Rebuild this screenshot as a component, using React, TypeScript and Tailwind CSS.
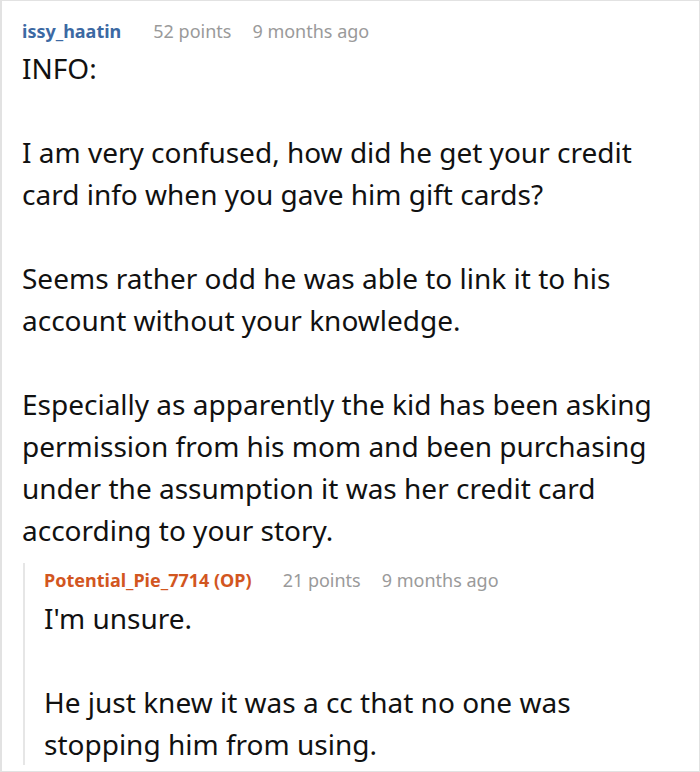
import React from "react";

const font = { fontFamily: '"Noto Sans", "Open Sans", sans-serif' };

export default function App() {
  return (
    <div
      className="w-[700px] h-[772px] bg-white border border-[#e2e2e2] border-l-2 overflow-hidden box-border"
      style={font}
    >
      <div className="pl-[20px] pr-4 pt-[14px]">
        <div className="flex items-baseline h-[32px] leading-[32px] text-[18px]">
          <span className="font-bold text-[#3c69a3]">issy_haatin</span>
          <span className="ml-[32px] text-[#9a9a9a]">52 points</span>
          <span className="ml-[21px] text-[#9a9a9a]">9 months ago</span>
        </div>
        <div className="text-[28px] leading-[42px] text-[#111] whitespace-pre-line">
          {"INFO:\n\nI am very confused, how did he get your credit card info when you gave him gift cards?\n\nSeems rather odd he was able to link it to his account without your knowledge.\n\nEspecially as apparently the kid has been asking permission from his mom and been purchasing under the assumption it was her credit card according to your story."}
        </div>
        <div className="mt-[12px] border-l-2 border-[#e6e6e6] pl-[19px] ml-[1px]">
          <div className="flex items-baseline h-[34px] leading-[34px] text-[18px]">
            <span className="font-bold text-[#d2561f]">Potential_Pie_7714 (OP)</span>
            <span className="ml-[31px] text-[#9a9a9a]">21 points</span>
            <span className="ml-[21px] text-[#9a9a9a]">9 months ago</span>
          </div>
          <div className="text-[28px] leading-[42px] text-[#111] whitespace-pre-line">
            {"I'm unsure.\n\nHe just knew it was a cc that no one was stopping him from using."}
          </div>
        </div>
      </div>
    </div>
  );
}
